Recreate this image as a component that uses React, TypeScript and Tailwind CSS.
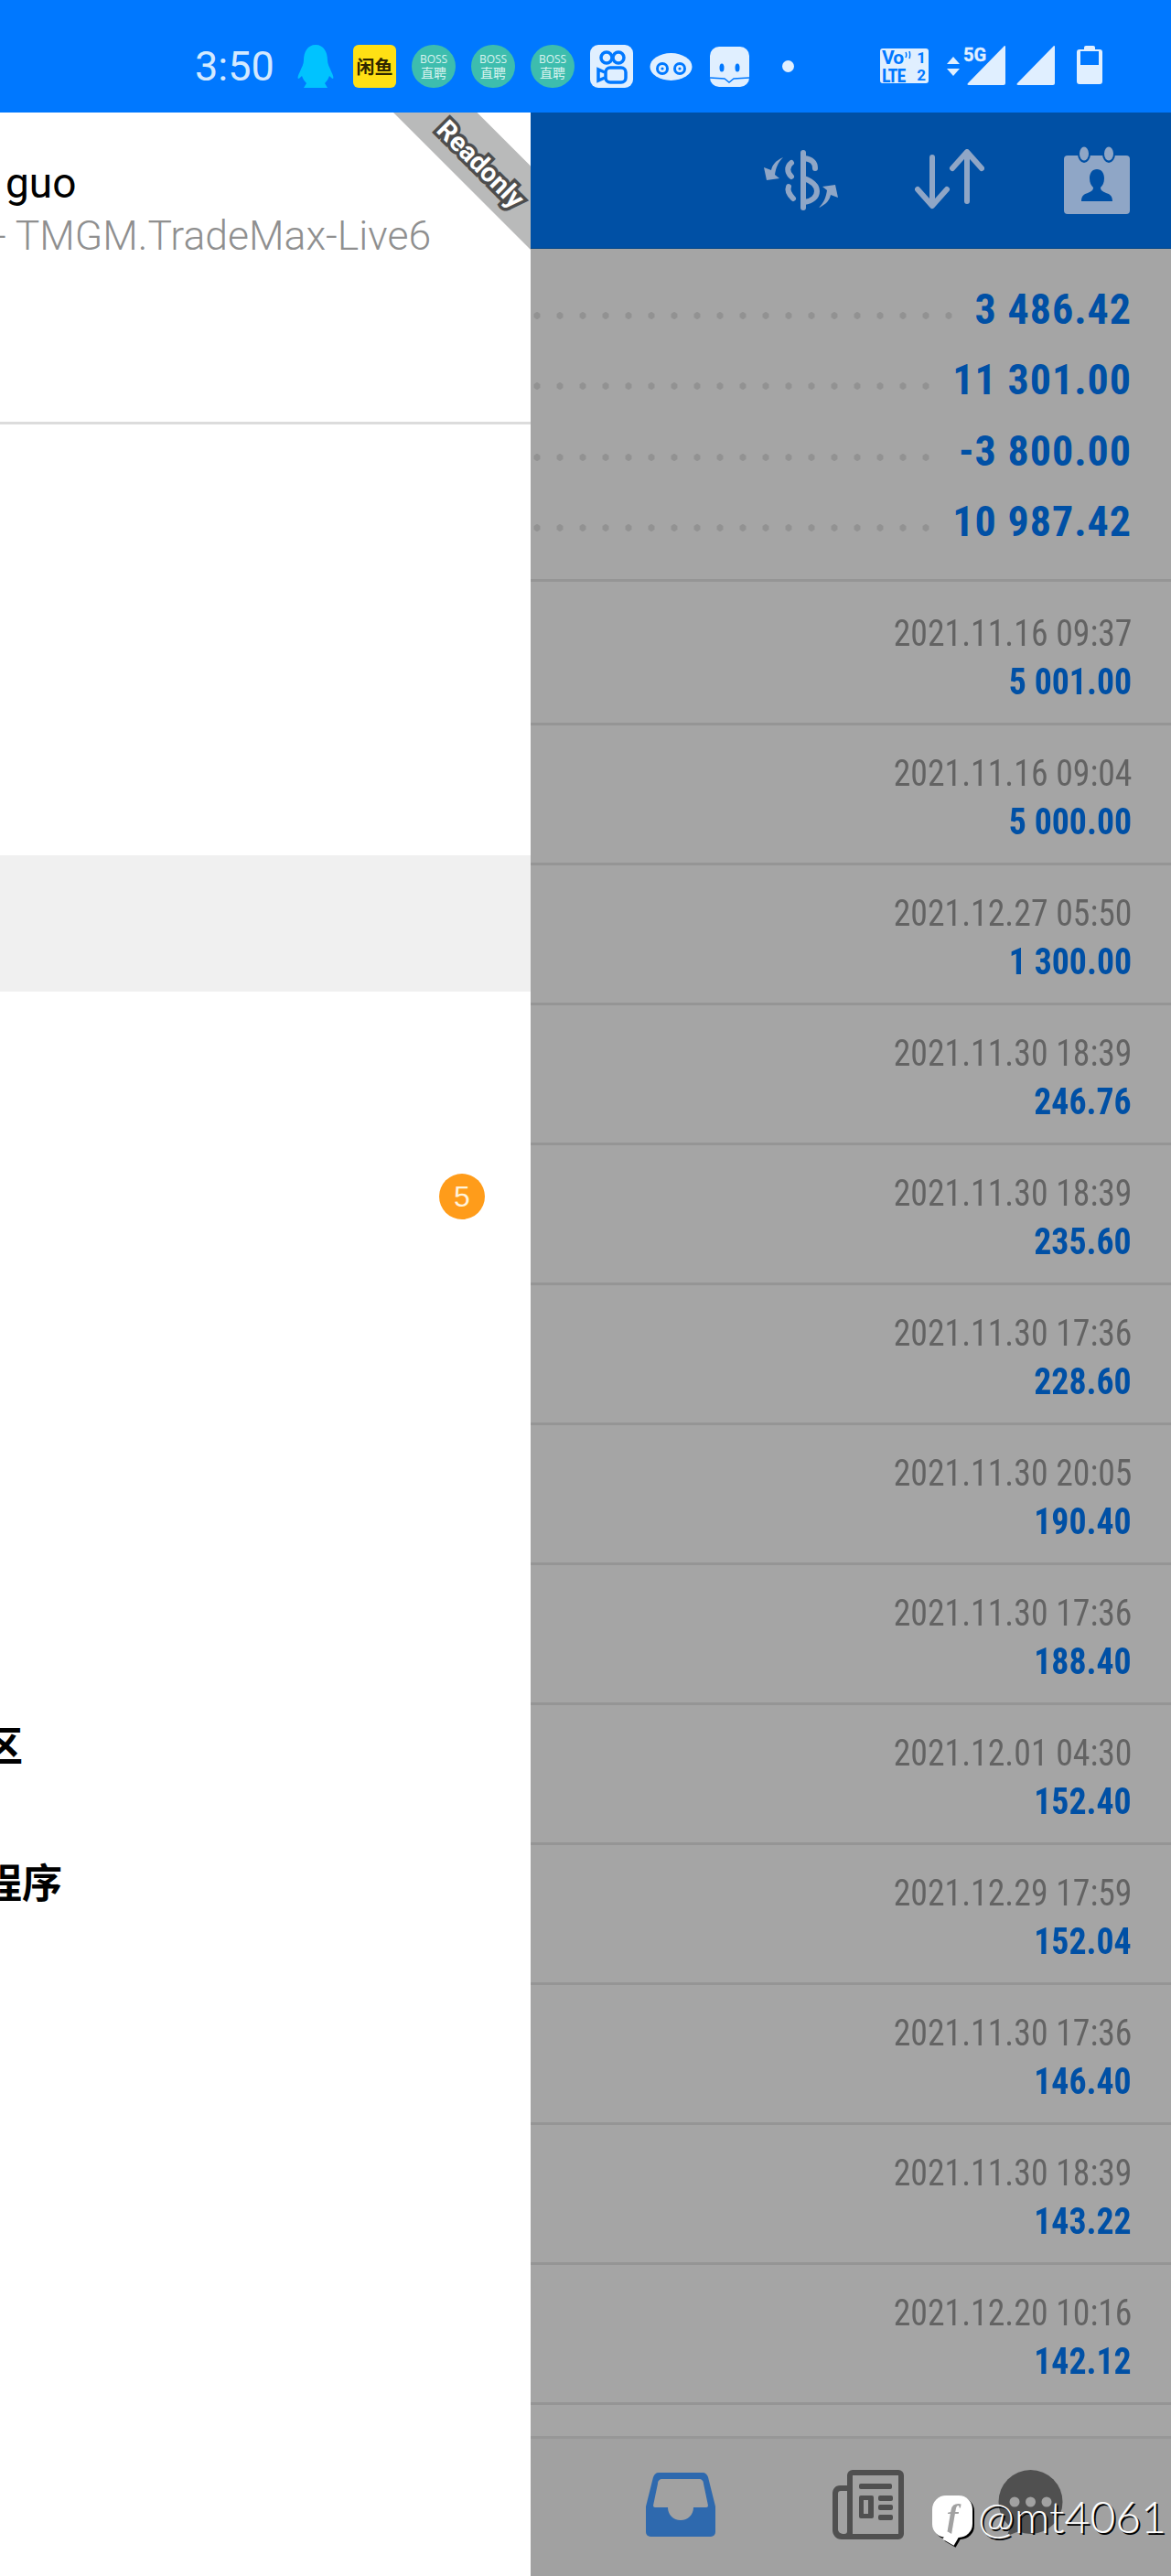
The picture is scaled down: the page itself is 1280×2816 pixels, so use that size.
import React from 'react';

const balances = [
    { value: '3 486.42' },
    { value: '11 301.00' },
    { value: '-3 800.00' },
    { value: '10 987.42' },
];

const deals = [
    { time: '2021.11.16 09:37', amount: '5 001.00' },
    { time: '2021.11.16 09:04', amount: '5 000.00' },
    { time: '2021.12.27 05:50', amount: '1 300.00' },
    { time: '2021.11.30 18:39', amount: '246.76' },
    { time: '2021.11.30 18:39', amount: '235.60' },
    { time: '2021.11.30 17:36', amount: '228.60' },
    { time: '2021.11.30 20:05', amount: '190.40' },
    { time: '2021.11.30 17:36', amount: '188.40' },
    { time: '2021.12.01 04:30', amount: '152.40' },
    { time: '2021.12.29 17:59', amount: '152.04' },
    { time: '2021.11.30 17:36', amount: '146.40' },
    { time: '2021.11.30 18:39', amount: '143.22' },
    { time: '2021.12.20 10:16', amount: '142.12' },
];

const BossBadge = () => (
    <div className="w-[48px] h-[47px] rounded-full bg-[#3dbdae] flex flex-col items-center justify-center text-[#d9f3ee] leading-none">
        <span className="text-[12px] font-['Open_Sans',sans-serif]">BOSS</span>
        <span className="text-[14px] mt-[1px] font-['Noto_Sans_CJK_SC',sans-serif]">直聘</span>
    </div>
);

const StatusBar = () => (
    <div className="h-[123px] shrink-0 bg-[#0078ff] relative flex items-center pt-[22px]">
        <span className="ml-[213px] w-[112px] text-[45px] leading-none text-[#d3e9ff] font-['Roboto',sans-serif]">3:50</span>
        <svg width="40" height="47" viewBox="0 0 40 47" className="shrink-0">
            <path d="M20 0c9 0 13 8 13 17 0 4 2 7 4 12 2 4 3 7 2 8-1 0-2-1-4-3-1 3-3 6-5 8l3 5H7l3-5c-2-2-4-5-5-8-2 2-3 3-4 3-1-1 0-4 2-8 2-5 4-8 4-12C7 8 11 0 20 0z" fill="#00c3ff" />
        </svg>
        <div className="ml-[21px] w-[47px] h-[47px] rounded-[6px] bg-[#ffe014] flex items-center justify-center text-[20px] leading-none font-bold text-[#2e2600] font-['Noto_Sans_CJK_SC',sans-serif]">闲鱼</div>
        <div className="ml-[17px] flex gap-[17px]">
            <BossBadge />
            <BossBadge />
            <BossBadge />
        </div>
        <div className="ml-[17px] w-[47px] h-[47px] rounded-[9px] bg-[#e0efff] flex items-center justify-center">
            <svg width="34" height="38" viewBox="0 0 34 38" fill="none" stroke="#0078ff" strokeWidth="3.5">
                <circle cx="11" cy="9" r="6" />
                <circle cx="24" cy="9" r="6" />
                <rect x="10" y="20" width="22" height="16" rx="5" />
                <path d="M9 25l-7-3v12l7-3" />
            </svg>
        </div>
        <svg width="47" height="32" viewBox="0 0 47 32" className="ml-[18px] shrink-0">
            <ellipse cx="23.5" cy="16" rx="23" ry="15" fill="#e0efff" />
            <circle cx="14" cy="18" r="7" fill="#0078ff" />
            <circle cx="33" cy="18" r="7" fill="#0078ff" />
            <circle cx="14" cy="18" r="4" fill="#e0efff" />
            <circle cx="33" cy="18" r="4" fill="#e0efff" />
            <circle cx="14" cy="18" r="1.6" fill="#0078ff" />
            <circle cx="33" cy="18" r="1.6" fill="#0078ff" />
        </svg>
        <svg width="43" height="44" viewBox="0 0 43 44" className="ml-[19px] shrink-0">
            <rect width="43" height="44" rx="10" fill="#e0efff" />
            <ellipse cx="13" cy="23" rx="2.5" ry="4.5" fill="#0078ff" />
            <ellipse cx="30" cy="23" rx="2.5" ry="4.5" fill="#0078ff" />
            <path d="M0 34l16 1 5 4 5-4 17-1" fill="none" stroke="#0078ff" strokeWidth="1.4" />
        </svg>
        <div className="ml-[36px] w-[13px] h-[13px] rounded-full bg-[#e0efff]" />
        <div className="absolute left-[962px] top-[53px] w-[53px] h-[38px] rounded-[3px] bg-[#e0efff] text-[#0078ff] font-bold leading-none font-['Roboto',sans-serif]">
            <div className="absolute left-[2px] top-[0px] text-[21px] tracking-[-1px]">Vo</div>
            <svg width="8" height="9" viewBox="0 0 8 9" className="absolute left-[27px] top-[3px]" fill="none" stroke="#0078ff" strokeWidth="1.5">
                <path d="M1 1c1 2 1 4 0 6M5 0c1 3 1 5 0 8" />
            </svg>
            <div className="absolute right-[3px] top-[2px] text-[17px]">1</div>
            <div className="absolute left-[2px] top-[20px] text-[20px] tracking-[-1px] [font-stretch:80%]">LTE</div>
            <div className="absolute right-[3px] top-[21px] text-[17px]">2</div>
        </div>
        <svg width="14" height="21" viewBox="0 0 14 21" className="absolute left-[1035px] top-[62px]" fill="#e0efff">
            <path d="M7 0l7 8H0zM0 13h14l-7 8z" />
        </svg>
        <svg width="42" height="43" viewBox="0 0 42 43" className="absolute left-[1057px] top-[50px]" fill="#e0efff">
            <path d="M41 0a1 1 0 011 1v40a2 2 0 01-2 2H2c-1.500 0-2-1-1-2z" />
        </svg>
        <span className="absolute left-[1053px] top-[50px] text-[20px] font-bold leading-none text-[#e0efff] font-['Roboto',sans-serif] [-webkit-text-stroke:0.3px_#e0efff]">5G</span>
        <svg width="42" height="43" viewBox="0 0 42 43" className="absolute left-[1111px] top-[50px]" fill="#e0efff">
            <path d="M41 0a1 1 0 011 1v40a2 2 0 01-2 2H2c-1.500 0-2-1-1-2z" />
        </svg>
        <svg width="28" height="43" viewBox="0 0 28 43" className="absolute left-[1177px] top-[49px]">
            <path d="M8 3a2 2 0 012-2h8a2 2 0 012 2v2h5a3 3 0 013 3v32a3 3 0 01-3 3H3a3 3 0 01-3-3V8a3 3 0 013-3h5z" fill="#e0efff" />
            <rect x="4" y="7" width="20" height="15" fill="#0078ff" />
        </svg>
    </div>
);

const Drawer = () => (
    <div className="w-[580px] shrink-0 bg-white relative overflow-hidden">
        <div className="h-[341px] border-b-[3px] border-[#dcdcdc] font-['Roboto',sans-serif]">
            <div className="pt-[51px] pl-[6px] text-[46px] leading-[52px] text-black">guo</div>
            <div className="-ml-[6px] mt-[7px] text-[44.5px] leading-[50px] font-light text-[#8f8f8f] whitespace-nowrap">- TMGM.TradeMax-Live6</div>
        </div>
        <div className="h-[24px]" />
        {[0, 1, 2].map((i) => <div key={i} className="h-[149px]" />)}
        <div className="h-[149px] bg-[#f0f0f0]" />
        <div className="h-[149.5px]" />
        <div className="h-[149.5px] flex items-center justify-end pr-[50px]">
            <span className="w-[50px] h-[50px] rounded-full bg-[#ff9c1a] text-[#fff3dc] text-[32px] leading-none flex items-center justify-center font-['Liberation_Sans',sans-serif]">5</span>
        </div>
        {[0, 1, 2].map((i) => <div key={i} className="h-[149.5px]" />)}
        <div className="h-[149.5px] flex items-center font-bold text-[44px] leading-none text-black font-['Noto_Sans_CJK_SC',sans-serif]">
            <span className="-ml-[19px]">区</span>
        </div>
        <div className="h-[149.5px] flex items-center font-bold text-[44px] leading-none text-black font-['Noto_Sans_CJK_SC',sans-serif]">
            <span className="-ml-[20px]">程序</span>
        </div>
        <div className="absolute top-0 right-0 w-[150px] h-[150px] bg-[#b9baba] [clip-path:polygon(0_0,61%_0,100%_39%,100%_100%)]" />
        <div className="absolute top-[-3px] right-[-40px] w-[190px] h-[120px] flex items-center justify-center rotate-45 text-[29px] font-bold text-white font-['Roboto',sans-serif] [-webkit-text-stroke:7px_#4d4d4d] [paint-order:stroke_fill]">Readonly</div>
    </div>
);

const Content = () => (
    <div className="flex-1 min-w-0 bg-[#a5a5a5] relative flex flex-col font-['Roboto',sans-serif]">
        <div className="h-[149px] shrink-0 bg-[#0050a5] border-b border-[#004488] relative">
            <svg width="82" height="66" viewBox="0 0 82 66" className="absolute left-[255px] top-[41px]" fill="none" stroke="#8fa6c6" strokeLinecap="round">
                <path d="M43 3v60" strokeWidth="6" />
                <path d="M44 9c8 1 12 4 12 11M44 57c9-1 14-6 14-12 0-7-6-11-14-14" strokeWidth="6" />
                <path d="M30 14c-5 4-5 10 0 15M27 40c-2 5 1 9 5 13" strokeWidth="6" />
                <path id="swap-arrow" d="M21 8C12 12 9 17 8 22L0 19l3 14 14-2-5-4c1-7 3-13 9-19z" fill="#8fa6c6" stroke="none" />
                <path d="M21 8C12 12 9 17 8 22L0 19l3 14 14-2-5-4c1-7 3-13 9-19z" transform="rotate(180 40.500 35.500)" fill="#8fa6c6" stroke="none" />
            </svg>
            <svg width="76" height="66" viewBox="0 0 76 66" className="absolute left-[420px] top-[40px]" fill="none" stroke="#8fa6c6" strokeWidth="6" strokeLinecap="round" strokeLinejoin="round">
                <path d="M19 9v52M3 44l16 18 16-18" />
                <path d="M57 4v53M41 21L57 3l16 18" />
            </svg>
            <svg width="72" height="74" viewBox="0 0 72 74" className="absolute left-[583px] top-[37px]">
                <rect x="0" y="10" width="72" height="64" rx="4" fill="#8fa6c6" />
                <ellipse cx="22" cy="8" rx="7" ry="10" fill="#0050a5" />
                <ellipse cx="49" cy="8" rx="7" ry="10" fill="#0050a5" />
                <ellipse cx="22" cy="8" rx="5" ry="7.500" fill="#8fa6c6" />
                <ellipse cx="49" cy="8" rx="5" ry="7.500" fill="#8fa6c6" />
                <path d="M36 25c5 0 8 4 8 10 0 5-2 8-4 10 0 3 2 4 6 6 4 1 7 3 7 9H19c0-6 3-8 7-9 4-2 6-3 6-6-2-2-4-5-4-10 0-6 3-10 8-10z" fill="#0050a5" />
            </svg>
        </div>
        <div className="h-[364px] shrink-0 border-b-[3px] border-[#959595] pt-[27px]">
            {balances.map((row) => (
                <div key={row.value} className="h-[77.500px] flex items-center pr-[43px]">
                    <div className="flex-1 h-[10px] mt-[14px] mr-[17px] bg-[radial-gradient(circle,#929292_3.5px,transparent_4px)] bg-[length:25px_10px] bg-[position:-5.500px_0] bg-repeat-x" />
                    <span className="text-[46px] tracking-[1px] leading-none font-bold text-[#0050a5] [font-stretch:75%] whitespace-nowrap">{row.value}</span>
                </div>
            ))}
        </div>
        {deals.map((deal, i) => (
            <div key={deal.time + deal.amount} className={`${i === 0 ? 'h-[157px] pt-[31px]' : 'h-[153px] pt-[27px]'} shrink-0 border-b-[3px] border-[#959595] pr-[43px] flex flex-col items-end`}>
                <span className="text-[41px] leading-[50px] text-[#636363] [font-stretch:75%] origin-right scale-x-[0.92] whitespace-nowrap">{deal.time}</span>
                <span className="mt-[4px] text-[40px] leading-[50px] font-bold text-[#0050a5] [font-stretch:75%] origin-right scale-x-[0.945] whitespace-nowrap">{deal.amount}</span>
            </div>
        ))}
        <div className="h-[37px] shrink-0 border-b-[3px] border-[#979797]" />
        <div className="flex-1 bg-[#a1a1a1]" />
        <svg width="76" height="70" viewBox="0 0 76 70" className="absolute left-[126px] top-[2580px]">
            <path d="M14 0h48c3 0 5 2 6 5l8 32v28a5 5 0 01-5 5H5a5 5 0 01-5-5V37L8 5c1-3 3-5 6-5z" fill="#2e69ae" />
            <path d="M18 7h40c3 0 5 2 5 5l5 24a2 2 0 01-2 2H52c0 8-6 14-14 14s-14-6-14-14H10a2 2 0 01-2-2l5-24c0-3 2-5 5-5z" fill="#a1a1a1" />
        </svg>
        <svg width="78" height="76" viewBox="0 0 78 76" className="absolute left-[330px] top-[2577px]">
            <path d="M22 0h50a6 6 0 016 6v64a6 6 0 01-6 6H10C4 76 0 71 0 66V26c0-5 3-9 8-9h8V6a6 6 0 016-6z" fill="#505050" />
            <path d="M22 6h50v64H22zM6 26c0-2 1-3 3-3h7v44c0 2-1 3-3 3-4 0-7-2-7-5z" fill="#a1a1a1" />
            <rect x="29" y="15" width="36" height="6" rx="2" fill="#505050" />
            <rect x="29" y="28" width="16" height="25" rx="2" fill="#505050" />
            <rect x="34" y="33" width="5" height="15" fill="#a1a1a1" />
            <rect x="50" y="28" width="16" height="6" rx="2" fill="#505050" />
            <rect x="50" y="38" width="16" height="6" rx="2" fill="#505050" />
            <rect x="50" y="49" width="16" height="6" rx="2" fill="#505050" />
        </svg>
        <svg width="75" height="72" viewBox="0 0 75 72" className="absolute left-[509px] top-[2577px]">
            <circle cx="37.500" cy="35" r="35" fill="#505050" />
            <path d="M16 60l-4 12 16-6z" fill="#505050" />
            <circle cx="20" cy="35" r="5.500" fill="#a1a1a1" />
            <circle cx="37.500" cy="35" r="5.500" fill="#a1a1a1" />
            <circle cx="55" cy="35" r="5.500" fill="#a1a1a1" />
        </svg>
        <div className="absolute left-[439px] top-[2604px] flex items-center">
            <div className="w-[44px] h-[46px] rounded-[15px] bg-white relative flex items-center justify-center [filter:drop-shadow(2px_2px_0_#000)]">
                <span className="text-[38px] italic font-bold leading-none text-[#a1a1a1] font-['Liberation_Serif',serif]">f</span>
                <span className="absolute left-[13px] bottom-[-6px] w-[14px] h-[10px] bg-white rotate-[30deg]" />
            </div>
            <span className="ml-[6px] text-[48px] leading-none font-light text-white font-['Lato',sans-serif] [text-shadow:2px_2px_0_#000] whitespace-nowrap">@mt4061</span>
        </div>
    </div>
);

export default function App() {
    return (
        <div className="w-[1280px] h-[2816px] overflow-hidden flex flex-col">
            <StatusBar />
            <div className="flex-1 min-h-0 flex">
                <Drawer />
                <Content />
            </div>
        </div>
    );
}
